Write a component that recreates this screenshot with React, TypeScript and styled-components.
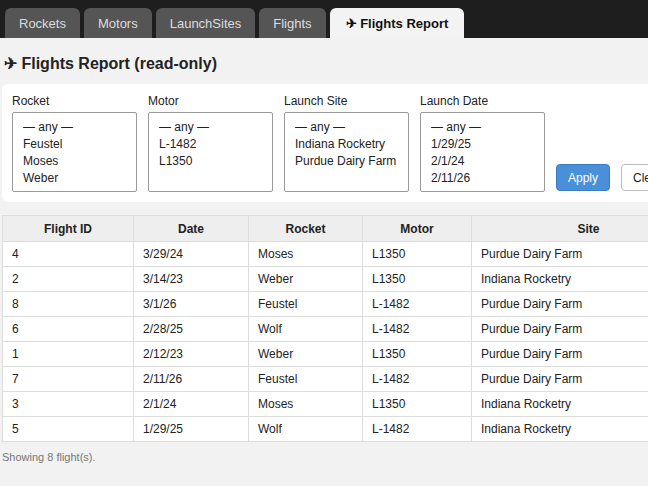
import React from 'react';
import styled, { createGlobalStyle } from 'styled-components';

const GlobalStyle = createGlobalStyle`
  html, body {
    margin: 0;
    padding: 0;
    background: #f2f2f2;
    font-family: "Liberation Sans", Arial, sans-serif;
    overflow: hidden;
  }
`;

const TabBar = styled.div`
  display: flex;
  gap: 4px;
  background: #1e1e1e;
  height: 38px;
  padding-left: 5px;
  align-items: flex-end;
  box-sizing: border-box;
`;

const Tab = styled.div<{ $active?: boolean }>`
  height: 30px;
  display: flex;
  align-items: center;
  padding: 0 ${p => (p.$active ? 16 : 14)}px;
  border-radius: 6px 6px 0 0;
  font-size: 13px;
  background: ${p => (p.$active ? '#f3f3f3' : '#555')};
  color: ${p => (p.$active ? '#111' : '#ddd')};
  font-weight: ${p => (p.$active ? 'bold' : 'normal')};
`;

const Main = styled.div`
  padding: 0 0 0 2px;
  width: 760px;
`;

const Heading = styled.h2`
  margin: 0;
  padding: 16px 0 0 2px;
  height: 46px;
  box-sizing: border-box;
  font-size: 16px;
  font-weight: bold;
  color: #222;
`;

const FilterCard = styled.div`
  background: #fff;
  border-radius: 6px;
  padding: 10px;
  display: flex;
  align-items: flex-end;
  gap: 11px;
  width: 700px;
  box-sizing: border-box;
`;

const Field = styled.div`
  display: flex;
  flex-direction: column;
  gap: 4px;
`;

const Label = styled.div`
  font-size: 12px;
  color: #222;
`;

const ListBox = styled.div`
  width: 125px;
  height: 80px;
  box-sizing: border-box;
  border: 1px solid #999;
  border-radius: 2px;
  padding: 6px 0 0 10px;
  font-size: 12px;
  line-height: 17px;
  color: #222;
  overflow: hidden;
`;

const Button = styled.button<{ $primary?: boolean }>`
  height: 27px;
  padding: 0 11px;
  margin-bottom: 1px;
  font-family: inherit;
  font-size: 12px;
  border-radius: 4px;
  border: 1px solid ${p => (p.$primary ? '#3a7cc4' : '#bbb')};
  background: ${p => (p.$primary ? '#4a90d9' : '#fff')};
  color: ${p => (p.$primary ? '#fff' : '#222')};
`;

const Table = styled.table`
  margin-top: 13px;
  border-collapse: collapse;
  background: #fff;
  font-size: 12px;
  color: #222;
  table-layout: fixed;
  width: 703px;
`;

const Th = styled.th<{ $w: number }>`
  width: ${p => p.$w}px;
  height: 25px;
  padding: 0;
  background: #eee;
  border: 1px solid #ddd;
  font-weight: bold;
  text-align: center;
`;

const Td = styled.td`
  height: 24px;
  border: 1px solid #ddd;
  padding: 0 9px;
`;

const Footer = styled.div`
  margin-top: 9px;
  font-size: 11px;
  color: #777;
`;

const filters = [
  { label: 'Rocket', items: ['— any —', 'Feustel', 'Moses', 'Weber'] },
  { label: 'Motor', items: ['— any —', 'L-1482', 'L1350'] },
  { label: 'Launch Site', items: ['— any —', 'Indiana Rocketry', 'Purdue Dairy Farm'] },
  { label: 'Launch Date', items: ['— any —', '1/29/25', '2/1/24', '2/11/26'] },
];

const cols: [string, number][] = [
  ['Flight ID', 131],
  ['Date', 115],
  ['Rocket', 114],
  ['Motor', 109],
  ['Site', 234],
];

const rows = [
  ['4', '3/29/24', 'Moses', 'L1350', 'Purdue Dairy Farm'],
  ['2', '3/14/23', 'Weber', 'L1350', 'Indiana Rocketry'],
  ['8', '3/1/26', 'Feustel', 'L-1482', 'Purdue Dairy Farm'],
  ['6', '2/28/25', 'Wolf', 'L-1482', 'Purdue Dairy Farm'],
  ['1', '2/12/23', 'Weber', 'L1350', 'Purdue Dairy Farm'],
  ['7', '2/11/26', 'Feustel', 'L-1482', 'Purdue Dairy Farm'],
  ['3', '2/1/24', 'Moses', 'L1350', 'Indiana Rocketry'],
  ['5', '1/29/25', 'Wolf', 'L-1482', 'Indiana Rocketry'],
];

const App = () => (
  <>
    <GlobalStyle />
    <TabBar>
      <Tab>Rockets</Tab>
      <Tab>Motors</Tab>
      <Tab>LaunchSites</Tab>
      <Tab>Flights</Tab>
      <Tab $active>✈ Flights Report</Tab>
    </TabBar>
    <Main>
      <Heading>✈ Flights Report (read-only)</Heading>
      <FilterCard>
        {filters.map(f => (
          <Field key={f.label}>
            <Label>{f.label}</Label>
            <ListBox>
              {f.items.map(i => (
                <div key={i}>{i}</div>
              ))}
            </ListBox>
          </Field>
        ))}
        <Button $primary>Apply</Button>
        <Button>Clear</Button>
      </FilterCard>
      <Table>
        <colgroup>
          {cols.map(([c, w]) => (
            <col key={c} style={{ width: w }} />
          ))}
        </colgroup>
        <thead>
          <tr>
            {cols.map(([c, w]) => (
              <Th key={c} $w={w}>{c}</Th>
            ))}
          </tr>
        </thead>
        <tbody>
          {rows.map(r => (
            <tr key={r[0]}>
              {r.map((c, i) => (
                <Td key={i}>{c}</Td>
              ))}
            </tr>
          ))}
        </tbody>
      </Table>
      <Footer>Showing 8 flight(s).</Footer>
    </Main>
  </>
);

export default App;
